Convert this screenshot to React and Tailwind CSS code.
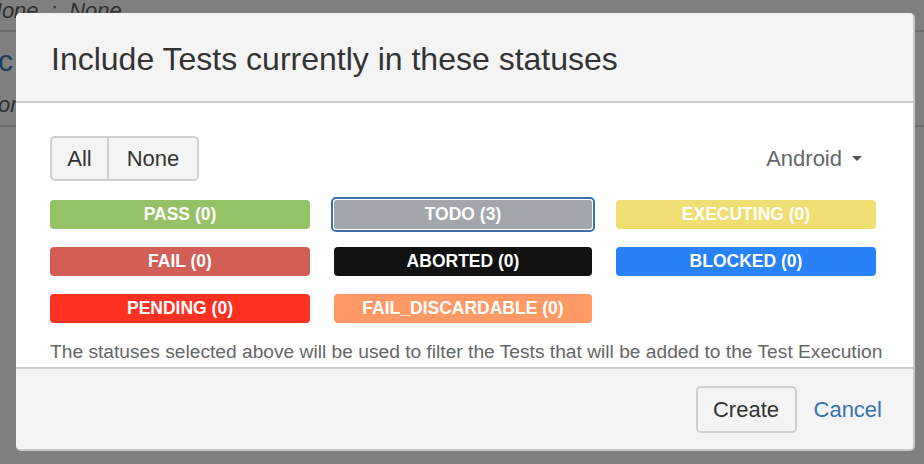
import React from 'react';

const statuses = [
  { label: 'PASS (0)', bg: 'bg-[#95c167]' },
  { label: 'TODO (3)', bg: 'bg-[#a3a6ad]', selected: true },
  { label: 'EXECUTING (0)', bg: 'bg-[#f0de72]' },
  { label: 'FAIL (0)', bg: 'bg-[#d35e55]' },
  { label: 'ABORTED (0)', bg: 'bg-[#111111]' },
  { label: 'BLOCKED (0)', bg: 'bg-[#2781f7]' },
  { label: 'PENDING (0)', bg: 'bg-[#ff3122]' },
  { label: 'FAIL_DISCARDABLE (0)', bg: 'bg-[#ff9966]' },
];

function StatusButton({ status }) {
  if (status.selected) {
    return (
      <div className="relative h-[29px]">
        <div className="absolute -inset-[3px] rounded-[5px] border-2 border-[#3d70aa] bg-white p-[1px]">
          <div className={`h-full w-full rounded-[3px] ${status.bg} flex items-center justify-center text-[17.5px] font-bold text-white`}>
            {status.label}
          </div>
        </div>
      </div>
    );
  }
  return (
    <div className={`h-[29px] rounded-[4px] ${status.bg} flex items-center justify-center text-[17.5px] font-bold text-white`}>
      {status.label}
    </div>
  );
}

export default function App() {
  return (
    <div
      className="relative w-[924px] h-[464px] overflow-hidden bg-[#7f7f7f]"
      style={{ fontFamily: '"Liberation Sans", Arial, sans-serif' }}
    >
      {/* page behind the modal, dimmed */}
      <div className="text-[#2f2f2f]">
        <div className="h-[32px] border-b-2 border-[#6c6c6c] -ml-[14px] text-[22px] italic leading-[22px]">
          None&nbsp;&nbsp;:&nbsp;&nbsp;None
        </div>
        <div className="h-[62px] -ml-[2px] pt-[14px] text-[30px] leading-[30px] text-[#1b3b5e]">c</div>
        <div className="h-[33px] border-b-2 border-[#6c6c6c] -ml-[8px] text-[22px] italic leading-[22px]">
          for
        </div>
      </div>

      {/* modal */}
      <div className="absolute left-[16px] top-[13px] w-[899px] h-[438px] rounded-[5px] border-r-2 border-b-2 border-[#c9c9c9] bg-white overflow-hidden flex flex-col">
        <div className="h-[90px] shrink-0 bg-[#f4f4f4] border-b-2 border-[#cdcdcd] pl-[35px] pt-[28px]">
          <h2 className="text-[32px] leading-[36px] text-[#333]">Include Tests currently in these statuses</h2>
        </div>

        <div className="flex-1 min-h-0 overflow-hidden pl-[34px] pr-[37px] pt-[33px]">
          <div className="flex items-center justify-between">
            <div className="flex h-[45px] rounded-[5px] border-2 border-[#cfcfcf] bg-[#f4f4f4] text-[22px] text-[#333]">
              <div className="w-[57px] flex items-center justify-center border-r-2 border-[#cfcfcf]">All</div>
              <div className="w-[88px] flex items-center justify-center">None</div>
            </div>
            <div className="flex items-center gap-[10px] pr-[14px] text-[22px] text-[#666]">
              <span>Android</span>
              <span className="h-0 w-0 border-l-[5px] border-r-[5px] border-t-[5px] border-l-transparent border-r-transparent border-t-[#555]" />
            </div>
          </div>

          <div className="mt-[19px] grid grid-cols-[260px_258px_260px] gap-x-[24px] gap-y-[18px]">
            {statuses.map((s) => (
              <StatusButton key={s.label} status={s} />
            ))}
          </div>

          <p className="mt-[18px] text-[19.2px] leading-[22px] text-[#666] whitespace-nowrap">
            The statuses selected above will be used to filter the Tests that will be added to the Test Execution
          </p>
        </div>

        <div className="h-[82px] shrink-0 bg-[#f4f4f4] border-t-2 border-[#cdcdcd] flex items-center justify-end gap-[17px] pr-[31px]">
          <button className="h-[47px] w-[101px] rounded-[5px] border-2 border-[#cfcfcf] bg-[#f4f4f4] text-[22px] text-[#333]">
            Create
          </button>
          <span className="text-[22px] text-[#3572b0]">Cancel</span>
        </div>
      </div>
    </div>
  );
}
